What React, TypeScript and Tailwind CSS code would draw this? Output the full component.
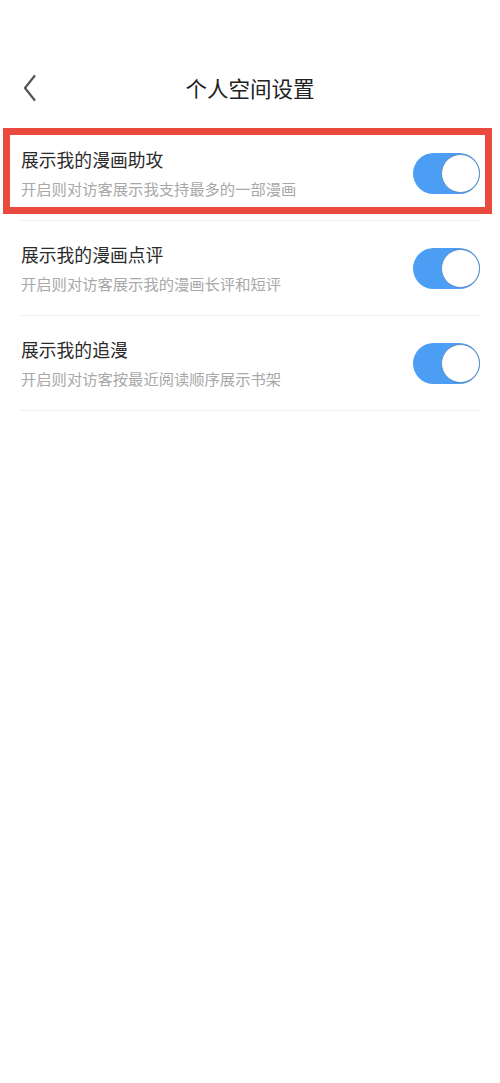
import { useState } from "react";

const rows = [
  { title: "展示我的漫画助攻", desc: "开启则对访客展示我支持最多的一部漫画" },
  { title: "展示我的漫画点评", desc: "开启则对访客展示我的漫画长评和短评" },
  { title: "展示我的追漫", desc: "开启则对访客按最近阅读顺序展示书架" },
];

function Toggle({ on, onClick }: { on: boolean; onClick: () => void }) {
  return (
    <button
      onClick={onClick}
      className={`flex h-[41px] w-[67px] shrink-0 items-center rounded-full p-0 ${
        on ? "justify-end bg-[#4b9ef3]" : "justify-start bg-[#e5e5e5]"
      }`}
    >
      <span className="h-[39px] w-[39px] rounded-full border-[1.5px] border-[#5b8cc2] bg-white" />
    </button>
  );
}

export default function App() {
  const [state, setState] = useState([true, true, true]);

  return (
    <div
      className="relative min-h-[1083px] w-full bg-white"
      style={{ fontFamily: '"Noto Sans CJK SC", "Noto Sans", sans-serif' }}
    >
      <div className="grid h-[126px] grid-cols-[1fr_auto_1fr] items-center px-[24px] pt-[70px] pb-[20px]">
        <svg width="14" height="28" viewBox="0 0 14 28" fill="none" className="ml-[-1px]">
          <path d="M11.5 2 L2 14 L11.5 26" stroke="#555" strokeWidth="2.2" strokeLinecap="round" strokeLinejoin="round" />
        </svg>
        <h1 className="text-[21.5px] leading-[36px] text-[#222]">个人空间设置</h1>
        <div />
      </div>

      <div className="px-[20px]">
        {rows.map((r, i) => (
          <div
            key={r.title}
            className="flex h-[95px] items-center justify-between border-b border-[#f0f0f0] pl-[1px]"
          >
            <div className="flex flex-col">
              <span className="text-[17.8px] leading-[24px] text-[#2a2a2a]">{r.title}</span>
              <span className="mt-[6px] text-[15.3px] leading-[22px] text-[#a8a8a8]">{r.desc}</span>
            </div>
            <Toggle
              on={state[i]}
              onClick={() => setState((s) => s.map((v, j) => (j === i ? !v : v)))}
            />
          </div>
        ))}
      </div>

      <div className="pointer-events-none absolute left-[3px] top-[128px] h-[86px] w-[489px] border-[7px] border-[#ea4a3d]" />
    </div>
  );
}
